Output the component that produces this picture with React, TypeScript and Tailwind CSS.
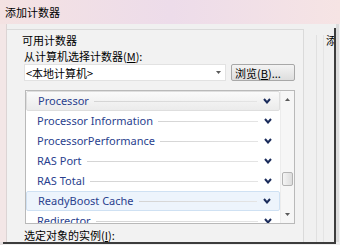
import cn from "clsx";

type Row = {
  name: string;
  state?: "hover" | "selected";
};

const rows: Row[] = [
  { name: "Processor", state: "hover" },
  { name: "Processor Information" },
  { name: "ProcessorPerformance" },
  { name: "RAS Port" },
  { name: "RAS Total" },
  { name: "ReadyBoost Cache", state: "selected" },
  { name: "Redirector" },
];

function Chevron() {
  return (
    <svg width="8" height="6" viewBox="0 0 8 6" className="shrink-0">
      <path d="M1 1 L4 4.5 L7 1" fill="none" stroke="#1b2c5c" strokeWidth="2" />
    </svg>
  );
}

function Arrow({ up }: { up?: boolean }) {
  return (
    <svg width="5" height="3" viewBox="0 0 5 3">
      <path d={up ? "M0 3 L2.5 0 L5 3 Z" : "M0 0 L5 0 L2.5 3 Z"} fill="#5a5a5a" />
    </svg>
  );
}

function CounterRow({ row }: { row: Row }) {
  return (
    <div
      className={cn(
        "flex h-[20px] shrink-0 items-center pl-[11px] pr-[8px]",
        row.state === "hover" &&
          "rounded-[2px] border border-[#dedede] bg-gradient-to-b from-[#fafafa] to-[#ebebeb] pl-[10px] pr-[7px]",
        row.state === "selected" &&
          "rounded-[2px] border border-[#cfe1f3] bg-[#edf4fc] pl-[10px] pr-[7px]"
      )}
    >
      <span className="whitespace-nowrap text-[11px] leading-[14px] text-[#2a3f8e]">
        {row.name}
      </span>
      <div className="mx-[5px] mr-[6px] h-px flex-1 bg-gradient-to-r from-[#d4d4d4] to-[#e4e4e4]" />
      <Chevron />
    </div>
  );
}

export default function App() {
  return (
    <div className="flex h-[245px] w-[340px] flex-col overflow-hidden bg-[#f0f0f0] font-['Noto_Sans','Noto_Sans_CJK_SC',sans-serif] text-[11px] text-black">
      {/* title bar */}
      <div className="flex h-[24px] shrink-0 items-center bg-gradient-to-r from-[#f4e2e2] via-[#eddcea] to-[#f6e4e4] pl-[5px]">
        <span className="font-['Noto_Sans_CJK_SC',sans-serif] text-[11px] leading-[14px]">
          添加计数器
        </span>
      </div>

      <div className="flex min-h-0 flex-1">
        {/* left frame */}
        <div className="w-[7px] shrink-0 border-r border-[#dcd4d4] bg-[#f3e6e6]" />

        {/* main panel */}
        <div className="mt-[5px] flex w-[297px] shrink-0 flex-col border-r border-t border-[#dadada] bg-[#f2f2f2] pl-[15px] font-['Noto_Sans_CJK_SC',sans-serif]">
          <div className="mt-[3px] h-[14px] leading-[14px]">可用计数器</div>
          <div className="ml-[2px] mt-[2px] h-[14px] leading-[14px]">
            从计算机选择计数器(<span className="underline">M</span>):
          </div>

          <div className="ml-[2px] mt-[1px] flex h-[17px] gap-[5px]">
            <div className="flex w-[202px] items-center justify-between border border-[#e2e2e2] bg-white pl-[1px] pr-[4px]">
              <span className="leading-[14px]">&lt;本地计算机&gt;</span>
              <Arrow />
            </div>
            <div className="flex w-[64px] items-center rounded-[2px] border border-[#a8a8a8] bg-gradient-to-b from-[#f4f4f4] to-[#dddddd] pl-[3px] leading-[14px]">
              浏览(<span className="underline">B</span>)...
            </div>
          </div>

          {/* list box */}
          <div className="ml-[3px] mt-[9px] flex h-[134px] w-[270px] border border-[#b9b9b9] bg-white">
            <div className="flex min-w-0 flex-1 flex-col overflow-hidden font-['Noto_Sans',sans-serif]">
              {rows.map((row) => (
                <CounterRow key={row.name} row={row} />
              ))}
            </div>
            <div className="flex w-[14px] shrink-0 flex-col border-l border-[#ececec] bg-[#f6f6f6]">
              <div className="flex h-[17px] items-center justify-center">
                <Arrow up />
              </div>
              <div className="flex-1">
                <div className="ml-px mr-px mt-[64px] h-[14px] rounded-[2px] border border-[#b3b3b3] bg-gradient-to-r from-[#f4f4f4] to-[#dcdcdc]" />
              </div>
              <div className="flex h-[17px] items-center justify-center">
                <Arrow />
              </div>
            </div>
          </div>

          <div className="ml-[2px] mt-[4px] h-[14px] leading-[14px]">
            选定对象的实例(<span className="underline">I</span>):
          </div>
        </div>

        {/* right side */}
        <div className="mt-[11px] w-[13px] shrink-0 border-r border-[#e0e0e0]" />
        <div className="mt-[11px] w-[7px] shrink-0 border-r border-[#e4e4e4]" />
        <div className="w-[10px] shrink-0 overflow-hidden pl-[2px] pt-[9px] font-['Noto_Sans_CJK_SC',sans-serif] leading-[14px]">
          添
        </div>
        <div className="mt-[4px] w-[2px] shrink-0 bg-[#3c3c3c]" />
        <div className="w-[3px] shrink-0 bg-[#dcdcdc]" />
      </div>

      {/* bottom edge */}
      <div className="flex h-[3px] shrink-0">
        <div className="w-[3px] bg-[#e6e0e0]" />
        <div className="h-[2px] w-[333px] bg-[#3c3c3c]" />
      </div>
    </div>
  );
}
